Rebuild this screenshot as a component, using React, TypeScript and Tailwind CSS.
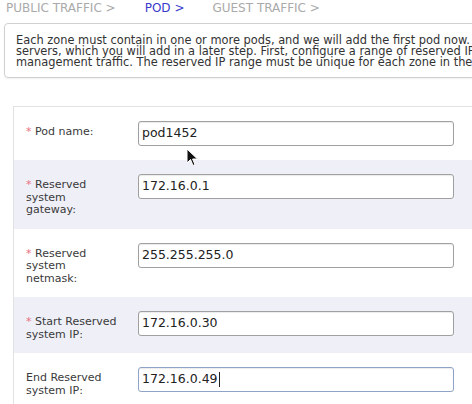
const fields = [
  { label: 'Pod name:', value: 'pod1452', required: true, shaded: false },
  { label: 'Reserved system gateway:', value: '172.16.0.1', required: true, shaded: true },
  { label: 'Reserved system netmask:', value: '255.255.255.0', required: true, shaded: false },
  { label: 'Start Reserved system IP:', value: '172.16.0.30', required: true, shaded: true },
  { label: 'End Reserved system IP:', value: '172.16.0.49', required: false, shaded: false, focused: true },
];

const intro = [
  'Each zone must contain in one or more pods, and we will add the first pod now. A pod contains hosts and primary storage',
  "servers, which you will add in a later step. First, configure a range of reserved IP addresses for CloudStack's internal",
  'management traffic. The reserved IP range must be unique for each zone in the cloud.',
];

export default function App() {
  return (
    <div className="relative w-[472px] h-[404px] overflow-hidden bg-white font-['DejaVu_Sans',sans-serif]">
      <div className="flex pt-[1px] pl-[6px] text-[12px] leading-[14px] whitespace-nowrap">
        <span className="text-[#aaaaaa]">PUBLIC TRAFFIC &gt;</span>
        <span className="ml-[29px] text-[#3a3acc]">POD &gt;</span>
        <span className="ml-[28px] text-[#aaaaaa]">GUEST TRAFFIC &gt;</span>
      </div>

      <div className="mt-[8px] ml-[4px] w-[720px] border border-[#d0d0d0] rounded-[4px] pt-[11px] pb-[9px] pl-[11px] text-[11.4px] leading-[11px] text-[#333333] whitespace-nowrap shadow-[0_1px_2px_rgba(0,0,0,0.06)]">
        {intro.map((line) => (
          <div key={line}>{line}</div>
        ))}
      </div>

      <div className="mt-[28px] ml-[13px] w-[600px] border-l border-t border-[#e2e2e2]">
        {fields.map((f) => (
          <div
            key={f.label}
            className={`flex items-start pt-[14px] pb-[12px] pl-[12px] ${f.shaded ? 'bg-[#efeff7]' : 'bg-white'}`}
          >
            <div className="w-[92px] pt-[5px] text-[11px] leading-[12.5px] text-[#3a3a3a]">
              {f.required && <span className="text-[#e8707e]">* </span>}
              {f.label}
            </div>
            <div
              className={`ml-[20px] mb-[2px] w-[316px] h-[25px] rounded-[3px] border bg-white pl-[3px] flex items-center text-[12.5px] text-[#222222] shadow-[inset_0_1px_1px_rgba(0,0,0,0.08)] ${
                f.focused ? 'border-[#8fa3c8]' : 'border-[#a0a0a0]'
              }`}
            >
              {f.value}
              {f.focused && <span className="ml-[1px] w-[1px] h-[15px] bg-[#222222]" />}
            </div>
          </div>
        ))}
      </div>

      <svg className="absolute left-[186px] top-[148px]" width="13" height="19" viewBox="0 0 13 19">
        <path d="M1 1 L1 15 L4.5 11.5 L7 17.5 L9 16.6 L6.6 11 L11.5 11 Z" fill="#111111" stroke="#ffffff" strokeWidth="1" />
      </svg>
    </div>
  );
}
